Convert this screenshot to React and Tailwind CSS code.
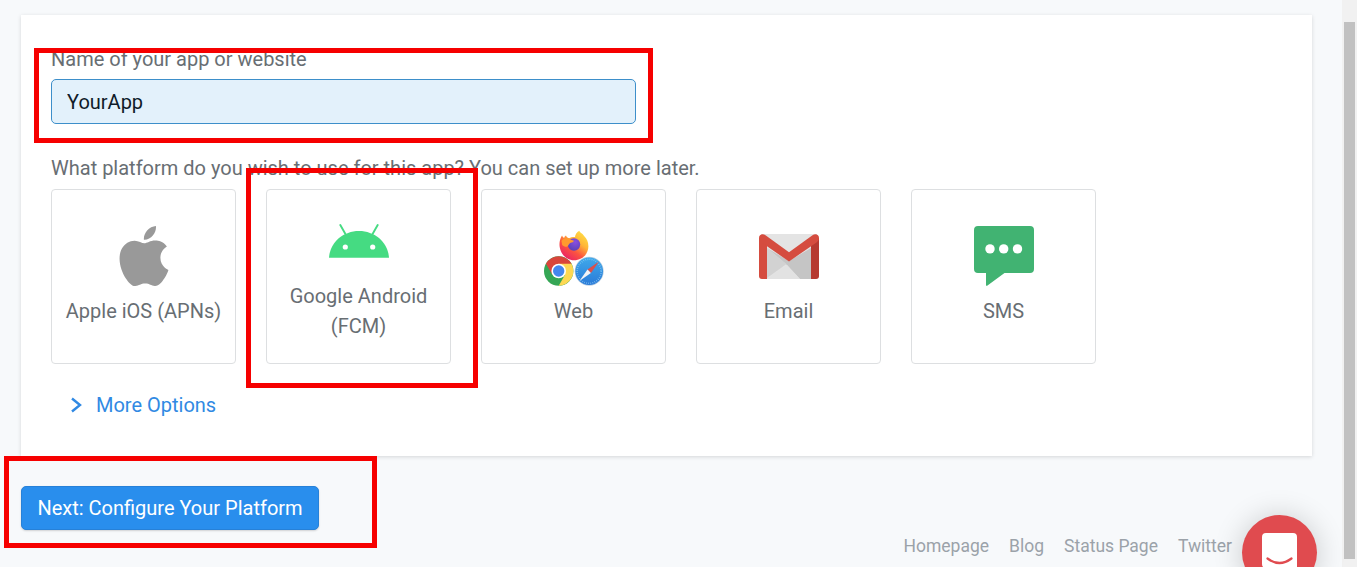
import React from "react";
import { SiApple } from "react-icons/si";

function AndroidIcon() {
  return (
    <svg width="60" height="34" viewBox="0 0 60 34">
      <path d="M0 33.8C1 18.5 14 7 30 7s29 11.5 30 26.800z" fill="#45db82" />
      <path d="M11.300 1l5.700 10M48.700 1L43 11" stroke="#45db82" strokeWidth="1.900" strokeLinecap="round" />
      <circle cx="16.300" cy="23" r="2.600" fill="#fff" />
      <circle cx="43.700" cy="23" r="2.600" fill="#fff" />
    </svg>
  );
}

function WebIcon() {
  return (
    <svg width="60" height="60" viewBox="0 0 60 60">
      <defs>
        <linearGradient id="fox" x1="0.85" y1="0.05" x2="0.2" y2="0.95">
          <stop offset="0" stopColor="#ffe045" />
          <stop offset="0.35" stopColor="#ffb438" />
          <stop offset="0.65" stopColor="#fb5440" />
          <stop offset="1" stopColor="#ea2068" />
        </linearGradient>
        <radialGradient id="globe" cx="0.6" cy="0.3" r="0.8">
          <stop offset="0" stopColor="#8a4fe0" />
          <stop offset="1" stopColor="#5540b0" />
        </radialGradient>
        <linearGradient id="compass" x1="0" y1="0" x2="0" y2="1">
          <stop offset="0" stopColor="#3fa9ea" />
          <stop offset="1" stopColor="#2a7ad8" />
        </linearGradient>
      </defs>
      <path
        d="M18 9.500c-2.300 3.500-3 8-2.200 12C17.200 29 23 34.300 30 34.300c8 0 14.400-6 14.400-14 0-4.500-1.600-7.500-4.100-10-1.500-2.800-4.500-3.600-5-5.600-2.700 1.500-4 3.700-4.300 6.300-2.800 0-4.500.5-6 1.200-1.500-.3-2.500-1.300-3-2.700-1 .5-1.600 1.400-1.900 2.400-.9-.5-1.700-1.300-2.100-2.400z"
        fill="url(#fox)"
      />
      <circle cx="30" cy="18.500" r="6.200" fill="url(#globe)" />
      <path d="M17.500 15c1.500-2.500 4.500-3.200 7-2.800 1.500 1 3.300 2 5.500 2.600-.4 1.400-2 1.700-3.300 2-1.200.5-1.500 1.500-2.500 2.700-1 2-4 1.500-6-.5z" fill="#ff9a2e" />
      <g>
        <circle cx="14.700" cy="45" r="14.700" fill="#35a655" />
        <path d="M14.700 45L8.300 48.700 1.970 37.650A14.700 14.700 0 0 1 27.430 37.650z" fill="#d9453b" />
        <path d="M14.700 37.650H27.430A14.700 14.700 0 0 1 14.700 59.700L21.070 48.700z" fill="#fdd853" />
        <circle cx="14.700" cy="45" r="7.300" fill="#fff" />
        <circle cx="14.700" cy="45" r="5.700" fill="#4487ef" />
      </g>
      <g>
        <circle cx="45.200" cy="45.300" r="14.500" fill="#b9cfe2" />
        <circle cx="45.200" cy="45.300" r="13.800" fill="url(#compass)" />
        <circle cx="45.200" cy="45.300" r="12" fill="none" stroke="#a6dcfa" strokeWidth="1.500" strokeDasharray="0.5 1.600" />
        <path d="M55 35.500L46.900 47l-3.400-3.400z" fill="#dc4f4a" />
        <path d="M35.400 55.100l8.100-11.500 3.400 3.400z" fill="#f3f4f6" />
      </g>
    </svg>
  );
}

function GmailIcon() {
  return (
    <svg width="60" height="45" viewBox="0 0 60 45">
      <rect x="2" width="56" height="45" fill="#e4e4e4" />
      <path d="M8 14l20 17 13 14h11V14L30 27z" fill="#c5c5c5" />
      <path d="M28 31L8 45h33z" fill="#e2e2e2" />
      <path d="M8 14l19.500 16L8 44z" fill="#d2d2d2" />
      <path d="M0 4h8v41H3a3 3 0 0 1-3-3z" fill="#d54c3f" />
      <path d="M52 4h8v38a3 3 0 0 1-3 3h-5z" fill="#b63a31" />
      <path d="M0 4C0 0 4-.6 6.500 1.300L30 18.200 53.500 1.300C56-.6 60 0 60 4c0 2-1 3.300-2.500 4.400L30 27.500 2.500 8.400C1 7.300 0 6 0 4z" fill="#d54c3f" />
    </svg>
  );
}

function SmsIcon() {
  return (
    <svg width="60" height="60" viewBox="0 0 60 60">
      <path d="M4 0h52a4 4 0 0 1 4 4v39a4 4 0 0 1-4 4H30.500L13.500 59.600Q12 60.500 12 58.800V47H4a4 4 0 0 1-4-4V4a4 4 0 0 1 4-4z" fill="#41b372" />
      <circle cx="16" cy="22.900" r="4.700" fill="#fff" />
      <circle cx="29.700" cy="22.900" r="4.700" fill="#fff" />
      <circle cx="43.500" cy="22.900" r="4.700" fill="#fff" />
    </svg>
  );
}

const platforms = [
  { label: "Apple iOS (APNs)", icon: <SiApple size={60} color="#999999" /> },
  { label: "Google Android (FCM)", icon: <AndroidIcon /> },
  { label: "Web", icon: <WebIcon /> },
  { label: "Email", icon: <GmailIcon /> },
  { label: "SMS", icon: <SmsIcon /> },
];

const links = ["Homepage", "Blog", "Status Page", "Twitter"];

export default function App() {
  return (
    <div className="relative flex h-[567px] w-full overflow-hidden bg-[#f7f9fb] font-['Roboto',sans-serif] text-[20px] leading-[30px] text-[#686e73]">
      <main className="flex-1 pt-[15px] pl-[21px]">
        <section className="h-[441px] w-[1291px] bg-white px-[30px] pt-[29px] shadow-[0_1px_4px_rgba(0,0,0,0.14)]">
          <label htmlFor="app-name" className="block h-[35px] whitespace-nowrap">Name of your app or website</label>
          <input
            id="app-name"
            defaultValue="YourApp"
            className="block h-[45px] w-[585px] rounded-[5px] border border-[#3d8fca] bg-[#e3f1fb] px-[15px] text-[#0f1b29] outline-none"
          />
          <p className="mt-[29px] h-[36px] whitespace-nowrap">What platform do you wish to use for this app? You can set up more later.</p>
          <div className="flex gap-[30px]">
            {platforms.map((p) => (
              <div key={p.label} className="flex h-[175px] w-[185px] flex-col items-center justify-center gap-[10px] rounded-[4px] border border-[#dddfe1] px-2 pb-px text-center">
                <div className="flex h-[60px] items-center">{p.icon}</div>
                <span>{p.label}</span>
              </div>
            ))}
          </div>
          <div className="mt-[26px] flex items-center pl-[19px] text-[#3089e3]">
            <svg width="12" height="16" viewBox="0 0 12 16" fill="none" stroke="currentColor" strokeWidth="2.400">
              <path d="M2 1.500L10 8l-8 6.500" />
            </svg>
            <span className="ml-[14px]">More Options</span>
          </div>
        </section>
        <button className="mt-[30px] block h-[44px] w-[298px] rounded-[5px] border border-[#2781d8] bg-[#298eed] whitespace-nowrap text-white shadow-[0_1px_2px_rgba(0,0,0,0.16)]">
          Next: Configure Your Platform
        </button>
        <footer className="mt-[1px] flex gap-5 pl-[882.500px] text-[17.500px] whitespace-nowrap text-[#9ba2a9]">
          {links.map((l) => (
            <span key={l}>{l}</span>
          ))}
        </footer>
      </main>
      <div className="w-[15px] bg-[#f1f1f1] px-[2px] pt-[22px]">
        <div className="h-[537px] w-[11px] bg-[#c1c1c1]" />
      </div>

      <div className="absolute top-[515px] left-[1242px] flex h-[75px] w-[75px] justify-center rounded-full bg-[#e04b4f] pt-[18px] shadow-[0_2px_30px_rgba(0,0,0,0.2)]">
        <svg width="35" height="40" viewBox="0 0 35 40" fill="none">
          <path d="M4 0h27a4 4 0 0 1 4 4v36l-8-5H4a4 4 0 0 1-4-4V4a4 4 0 0 1 4-4z" fill="#fff" />
          <path d="M5.500 25.500q12 9 24 0" stroke="#e04b4f" strokeWidth="2.200" strokeLinecap="round" />
        </svg>
      </div>

      <div className="absolute top-[48px] left-[34px] h-[95px] w-[619px] border-5 border-[#f60000]" />
      <div className="absolute top-[168px] left-[246px] h-[220px] w-[232px] border-5 border-[#f60000]" />
      <div className="absolute top-[456px] left-[4px] h-[92px] w-[373px] border-5 border-[#f60000]" />
    </div>
  );
}
